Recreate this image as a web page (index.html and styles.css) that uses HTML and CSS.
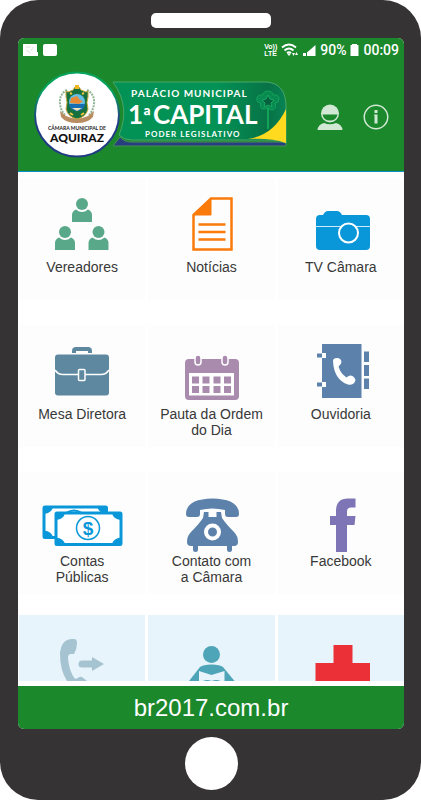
FILE: index.html
```html
<!DOCTYPE html>
<html lang="pt-BR">
<head>
    <meta charset="UTF-8">
    <meta name="viewport" content="width=device-width, initial-scale=1.0">
    <title>Câmara Municipal de Aquiraz</title>
    <link rel="stylesheet" href="styles.css">
</head>
<body>
    <div class="phone">
        <div class="speaker"></div>

        <div class="screen">
            <div class="status-bar">
                <svg class="notifications" width="36" height="14" viewBox="0 0 36 14" fill="#fff">
                    <path d="M1 1h14v8h1v4H1z"></path>
                    <path d="M4 4h5M4 7l5 3M11 4l-2 4" fill="none" stroke="#d9e8db" stroke-width="1"></path>
                    <rect x="21" y="1" width="14" height="12" rx="2"></rect>
                </svg>
                <div class="volte"><span>Vo))</span><span>LTE</span></div>
                <svg width="18" height="14" viewBox="0 0 18 14" fill="none" stroke="#fff" stroke-width="2">
                    <path d="M1 4.500Q8 -1.500 15 4.500"></path>
                    <path d="M3.500 7.500Q8 3.500 12.500 7.500"></path>
                    <path d="M6 10Q8 8.500 10 10"></path>
                    <path d="M6 10.500L8 13l2-2.500z" fill="#fff" stroke="none"></path>
                    <path d="M11 10l1.500 3 1.500-3zM14 12l1.500-3 1.500 3z" fill="#fff" stroke="none"></path>
                </svg>
                <svg width="13" height="14" viewBox="0 0 13 14" fill="#fff">
                    <rect x="0" y="10" width="3" height="3"></rect>
                    <path d="M12.500 2v11H4V9.500z"></path>
                </svg>
                <span class="status-text">90%</span>
                <svg width="9" height="14" viewBox="0 0 9 14" fill="#fff">
                    <path d="M2 1h5v1h1.500v11H.500V2H2z"></path>
                </svg>
                <span class="status-text">00:09</span>
            </div>

            <header class="header">
                <svg class="logo" viewBox="0 0 253 88" role="img" aria-label="Câmara Municipal de Aquiraz">
                    <defs>
                        <linearGradient id="badge" x1="0" x2="1" y1="0" y2="0">
                            <stop offset="0.6" stop-color="#039255"></stop>
                            <stop offset="0.9" stop-color="#087246"></stop>
                            <stop offset="1" stop-color="#078454"></stop>
                        </linearGradient>
                        <linearGradient id="ring" x1="0" x2="0" y1="0" y2="1">
                            <stop offset="0.2" stop-color="#06a35c"></stop>
                            <stop offset="0.6" stop-color="#223c83"></stop>
                        </linearGradient>
                    </defs>
                    <!-- badge -->
                    <path d="M86 66L79 75H252V71H97Q90 71 86 66z" fill="#26407f" stroke="#4a8b5b" stroke-width="1"></path>
                    <path d="M79 11H232Q252 12 252 36V72Q246 69 236 69H97Q90 69 85 64Q97 36 79 11z" fill="url(#badge)" stroke="#4aa56b" stroke-width="1"></path>
                    <path d="M252 38V72Q238 67 214 68Q240 64 252 38z" fill="#ffda1f"></path>
                    <path d="M234 32V58" stroke="#12a35b" stroke-width="2"></path>
                    <path d="M234 20q5 0 5 4 6-1 6 4 0 4-4 4 2 6-3 7-4 0-4-3-2 3-6 2-3-2-1-6-5 0-4-5 1-4 6-3 0-4 5-4z" fill="#098a50" stroke="#12a35b" stroke-width="1"></path>
                    <path d="M234 24l2 4 4 1-3 3 1 4-4-2-4 2 1-4-3-3 4-1z" fill="#07613e" stroke="#19a962" stroke-width="1"></path>
                    <text class="logo-line" x="97" y="26">PALÁCIO MUNICIPAL</text>
                    <text class="logo-title" x="94" y="53">1<tspan class="logo-ordinal">ª</tspan><tspan x="119">CAPITAL</tspan></text>
                    <text class="logo-line small" x="111" y="66">PODER LEGISLATIVO</text>
                    <!-- seal -->
                    <circle cx="43" cy="43.500" r="42" fill="#fff" stroke="url(#ring)" stroke-width="2"></circle>
                    <path d="M33 19q-8 4-7 14 1 7 5 11M53 19q8 4 7 14-1 7-5 11" fill="none" stroke="#8fb391" stroke-width="2" stroke-dasharray="2 1"></path>
                    <path d="M26 40l6 5q11 5 22 0l6-5-1 6q-5 6-16 6t-16-6z" fill="#b98d62"></path>
                    <path d="M34 21l5-2 2-3h4l2 3 5 2 2-1v6q-2 5 0 12-2 8-11 10-9-2-11-10 2-7 0-12v-6z" fill="#16713e" stroke="#c5a83d" stroke-width="1"></path>
                    <path d="M41 14h4v4h-4z" fill="#efb420"></path>
                    <circle cx="43" cy="31" r="8" fill="#68bfe6"></circle>
                    <path d="M37 27l6-2 3 4 3 1-4 3-9-1z" fill="#e98a35"></path>
                    <path d="M35 33h16q-1 7-8 7t-8-7z" fill="#176eb3"></path>
                    <path d="M38 37h10l-5 3z" fill="#f2e5ba"></path>
                    <path d="M36 22l2 1M48 23l2-1M36 42l3 2M47 44l3-2" stroke="#f0c33c" stroke-width="2"></path>
                    <text class="seal-small" x="43" y="59">CÂMARA MUNICIPAL DE</text>
                    <text class="seal-name" x="43" y="71">AQUIRAZ</text>
                </svg>
                <div class="actions">
                    <button type="button" aria-label="Perfil">
                        <svg width="26" height="26" viewBox="0 0 26 26" fill="#d1e8d5">
                            <circle cx="13" cy="9.500" r="9"></circle>
                            <path d="M5.500 10.500h15q-1 6-7.500 6t-7.500-6z" fill="#1b882c"></path>
                            <path d="M.500 26q.500-5.500 6.500-7 6 2.500 12 0 6 1.500 6.500 7z"></path>
                        </svg>
                    </button>
                    <button type="button" aria-label="Informações">
                        <svg width="26" height="26" viewBox="0 0 26 26" fill="#d1e8d5">
                            <circle cx="13" cy="13" r="11.750" fill="none" stroke="#d1e8d5" stroke-width="1.500"></circle>
                            <rect x="11.500" y="6" width="3" height="3"></rect>
                            <path d="M11 10.500h3.500V19.500h-3v-8H11z"></path>
                        </svg>
                    </button>
                </div>
            </header>

            <nav class="menu">
                <a class="tile" href="#vereadores">
                    <svg class="icon" viewBox="0 0 90 63" fill="#5aa88a">
                        <defs>
                            <g id="person">
                                <circle r="6"></circle>
                                <path d="M-10 18V11q0-4 4-5.500q6 5 12 0q4 1.500 4 5.500V18z"></path>
                            </g>
                        </defs>
                        <use href="#person" x="45" y="8"></use>
                        <use href="#person" x="28" y="36"></use>
                        <use href="#person" x="61.500" y="36"></use>
                    </svg>
                    Vereadores
                </a>
                <a class="tile" href="#noticias">
                    <svg class="icon" viewBox="0 0 90 63" fill="none" stroke="#fa7a0a" stroke-width="2.500">
                        <path d="M27.500 19L45 2.500H65.500V53.500H27.500z"></path>
                        <path d="M27.500 19L45 2.500V19z" fill="#fa7a0a" stroke-width="1"></path>
                        <path d="M32.500 28.500H59.500M32.500 36H59.500M32.500 43.500H59.500"></path>
                    </svg>
                    Notícias
                </a>
                <a class="tile" href="#tv-camara">
                    <svg class="icon" viewBox="0 0 90 63" fill="#0a97d9">
                        <path d="M24 19h3q2-4 5-4h9q3 0 5 4h24q4 0 4 4v27q0 4-4 4H24q-4 0-4-4V23q0-4 4-4z"></path>
                        <path d="M20 30.500H74" stroke="#cdeaf8" stroke-width="1"></path>
                        <circle cx="52.500" cy="37" r="9.500" stroke="#fff" stroke-width="2"></circle>
                    </svg>
                    TV Câmara
                </a>

                <a class="tile" href="#mesa-diretora">
                    <svg class="icon" viewBox="0 0 90 63" fill="#5d88a0">
                        <path d="M37 10V8q0-2 2-2h12q2 0 2 2v2" fill="none" stroke="#5d88a0" stroke-width="4"></path>
                        <rect x="18" y="11.500" width="54" height="41" rx="3"></rect>
                        <path d="M18 27q3 4.500 8 4.500H64q5 0 8-4.500" fill="none" stroke="#fff" stroke-width="1.500"></path>
                        <rect x="41.500" y="26.500" width="6.500" height="11" rx="1" stroke="#fff" stroke-width="1.500"></rect>
                    </svg>
                    Mesa Diretora
                </a>
                <a class="tile" href="#pauta">
                    <svg class="icon" viewBox="0 0 90 63" fill="#a98bad">
                        <rect x="19" y="16" width="54" height="41" rx="4"></rect>
                        <rect x="23" y="30" width="45" height="22.500" fill="#fff"></rect>
                        <path d="M26 33.500h7v7h-7zM36.500 33.500h7v7h-7zM47.500 33.500h7v7h-7zM58 33.500h7v7h-7zM26 43h7v7h-7zM36.500 43h7v7h-7zM47.500 43h7v7h-7zM58 43h7v7h-7z"></path>
                        <rect x="29" y="12" width="6" height="10" rx="3" stroke="#fff" stroke-width="1.500"></rect>
                        <rect x="56" y="12" width="6" height="10" rx="3" stroke="#fff" stroke-width="1.500"></rect>
                    </svg>
                    Pauta da Ordem<br>do Dia
                </a>
                <a class="tile" href="#ouvidoria">
                    <svg class="icon" viewBox="0 0 90 63" fill="#5c82ac">
                        <rect x="26" y="1" width="39.500" height="54"></rect>
                        <path d="M21 10.500h5v4h-5zM21 39.500h5v4h-5z"></path>
                        <path d="M26 10h4v5h-4zM26 39h4v5h-4z" fill="#fff"></path>
                        <path d="M68 8.500h5V19h-5zM68 22h5V33h-5zM68 35.500h5V46h-5z"></path>
                        <path d="M37 18q0-3 4-3 4 0 4.500 4 0 2-3 4.500 2 7 8 11 3-3 6-1.500 4 3 2.500 5.500-2 4-7 3Q38 37 37 18z" fill="#fff"></path>
                    </svg>
                    Ouvidoria
                </a>

                <a class="tile" href="#contas">
                    <svg class="icon" viewBox="0 0 90 63" fill="#0a97d9">
                        <rect x="7" y="17" width="62.500" height="30.500" rx="1" fill="#fff" stroke="#0a97d9" stroke-width="3"></rect>
                        <path d="M7 17h9q-1 6-9 7zM69.500 17h-9q1 6 9 7zM7 47.500h9q-1-6-9-7z"></path>
                        <path d="M29 23q8-5 16 0" fill="none" stroke="#0a97d9" stroke-width="2"></path>
                        <rect x="19" y="23" width="65" height="31.500" rx="1" fill="#fff" stroke="#0a97d9" stroke-width="3"></rect>
                        <path d="M19 23h9q-1 6-9 7zM84 23h-9q1 6 9 7zM19 54.500h9q-1-6-9-7zM84 54.500h-9q1-6 9-7z"></path>
                        <circle cx="51" cy="38" r="11.500" fill="#fff" stroke="#0a97d9" stroke-width="1.500"></circle>
                        <text class="money" x="51" y="45">$</text>
                    </svg>
                    Contas<br>Públicas
                </a>
                <a class="tile" href="#contato">
                    <svg class="icon" viewBox="0 0 90 63" fill="#5c82ac">
                        <path d="M20 24Q20 9 46.500 8.500Q73 9 73 24Q73 27 70 27H62Q59 27 59 24V20Q46 17 34 20V24Q34 27 31 27H23Q20 27 20 24z"></path>
                        <path d="M38 22h4.500v5h8v-5H55l1 6q4 6 12 14 4 4 4 10 0 4-4 4h-2v4q0 2-2.500 2T61 60v-4H32v4q0 2-2.500 2T27 60v-4h-2q-4 0-4-4 0-6 4-10 8-8 12-14z"></path>
                        <circle cx="46.500" cy="42" r="6.500" stroke="#fff" stroke-width="4"></circle>
                    </svg>
                    Contato com<br>a Câmara
                </a>
                <a class="tile" href="#facebook">
                    <svg class="icon" viewBox="0 0 90 63" fill="#7d75b5">
                        <path d="M40 62V35H34V26h6V21Q40 8.500 52 8.500H59.500V17.500H55Q51 17.500 51 21.500V26H59.500L58.500 35H51V62z"></path>
                    </svg>
                    Facebook
                </a>
            </nav>

            <!-- next row, cut off by the footer -->
            <nav class="menu-next">
                <a href="#telefones" aria-label="Telefones">
                    <svg viewBox="0 0 90 66" fill="#a6c3d2">
                        <path d="M37 24Q24 23 23 39Q23 55 30 66H50L45 62Q43 61 41 63L38 64Q32 56 31 43Q31 39 34 39H37Q40 34 40 28Q40 24 37 24z"></path>
                        <path d="M45 45.500H55V42L67 49L55 56V52.500H45Q41.500 52.500 41.500 49T45 45.500z"></path>
                    </svg>
                </a>
                <a href="#biblioteca" aria-label="Biblioteca">
                    <svg viewBox="0 0 90 66" fill="#4fa5b8">
                        <circle cx="45.500" cy="39.500" r="8.500"></circle>
                        <path d="M23 66L34 52Q37 49.500 45.500 49.500T57 52L68.500 66z"></path>
                        <path d="M33 56L45.500 60L58.500 56V66H33z" fill="#e8f4fb"></path>
                        <path d="M37 66q4-2 8.500 0 5-2 9 0z"></path>
                    </svg>
                </a>
                <a href="#saude" aria-label="Saúde">
                    <svg viewBox="0 0 90 66" fill="#eb3137">
                        <path d="M37.500 30h19v18H74v18H19.500V48h18z"></path>
                    </svg>
                </a>
            </nav>

            <footer class="footer">
                <a href="#site">br2017.com.br</a>
            </footer>
        </div>

        <button type="button" class="home" aria-label="Início"></button>
    </div>
</body>
</html>
```
FILE: styles.css
```css
:root {
    --green: #1b882c;
    --case: #363334;
    --text-color: #383838;
    --tile-bg: #fdfdfd;
    --tile-next-bg: #e8f4fb;
}

* {
    margin: 0;
    padding: 0;
    box-sizing: border-box;
}

body {
    background-color: #fff;
    font-family: "Liberation Sans", Arial, sans-serif;
    color: var(--text-color);
}

a {
    color: inherit;
    text-decoration: none;
}

button {
    border: none;
    background: none;
    cursor: pointer;
}

svg {
    display: block;
}

.phone {
    min-height: 100vh;
    padding: 13px 17px 10px 18px;
    background-color: var(--case);
    border-radius: 38px;
    display: flex;
    flex-direction: column;
    align-items: center;
}

.speaker {
    width: 120px;
    height: 15px;
    margin-bottom: 10px;
    background-color: #fff;
    border-radius: 5px;
}

.screen {
    width: 100%;
    flex: 1;
    background-color: #fff;
    border-radius: 6px;
    overflow: hidden;
    display: flex;
    flex-direction: column;
}

/* status bar */
.status-bar {
    height: 24px;
    padding: 0 5px 0 4px;
    background-color: var(--green);
    color: #fff;
    display: flex;
    align-items: center;
    gap: 4px;
}

.notifications {
    margin-right: auto;
}

.volte {
    font-size: 7px;
    line-height: 7px;
    font-weight: bold;
    display: flex;
    flex-direction: column;
}

.status-text {
    font-family: Roboto, sans-serif;
    font-size: 14px;
    font-weight: 500;
}

/* header */
.header {
    padding: 9px 15px 12px 16px;
    background-color: var(--green);
    border-bottom: 1px solid #0a8fc4;
    display: flex;
    align-items: center;
    justify-content: space-between;
}

.logo {
    width: 253px;
    height: 88px;
}

.logo text {
    font-family: Lato, sans-serif;
    font-weight: bold;
}

.logo-line {
    font-size: 10px;
    letter-spacing: 1px;
    fill: #fff;
}

.logo-line.small {
    font-size: 8px;
}

.logo-title {
    font-size: 26px;
    fill: #fff;
}

.logo-ordinal {
    font-size: 22px;
}

.seal-small {
    font-size: 5px;
    text-anchor: middle;
    fill: #222;
}

.logo .seal-name {
    font-size: 12px;
    font-weight: 900;
    text-anchor: middle;
    fill: #111;
}

.actions {
    padding-top: 4px;
    display: flex;
    gap: 20px;
}

/* menu */
.menu {
    flex: 1;
    padding: 6px 0 21px 1px;
    display: grid;
    grid-template-columns: repeat(3, 1fr);
    gap: 25px 3px;
}

.tile {
    min-height: 122px;
    padding-top: 18px;
    background-color: var(--tile-bg);
    font-size: 14px;
    line-height: 16px;
    text-align: center;
}

.icon {
    width: 90px;
    height: 63px;
    margin: 0 auto;
}

.money {
    font-family: "Liberation Sans", Arial, sans-serif;
    font-size: 19px;
    font-weight: bold;
    text-anchor: middle;
}

.menu-next {
    padding: 0 0 5px 1px;
    display: grid;
    grid-template-columns: repeat(3, 1fr);
    gap: 3px;
}

.menu-next a {
    background-color: var(--tile-next-bg);
}

.menu-next svg {
    width: 90px;
    height: 66px;
    margin: 0 auto;
}

/* footer */
.footer {
    background-color: var(--green);
    color: #fff;
    font-size: 24px;
    line-height: 43px;
    text-align: center;
}

.home {
    width: 53px;
    height: 53px;
    margin-top: 8px;
    background-color: #fff;
    border-radius: 50%;
}
```
